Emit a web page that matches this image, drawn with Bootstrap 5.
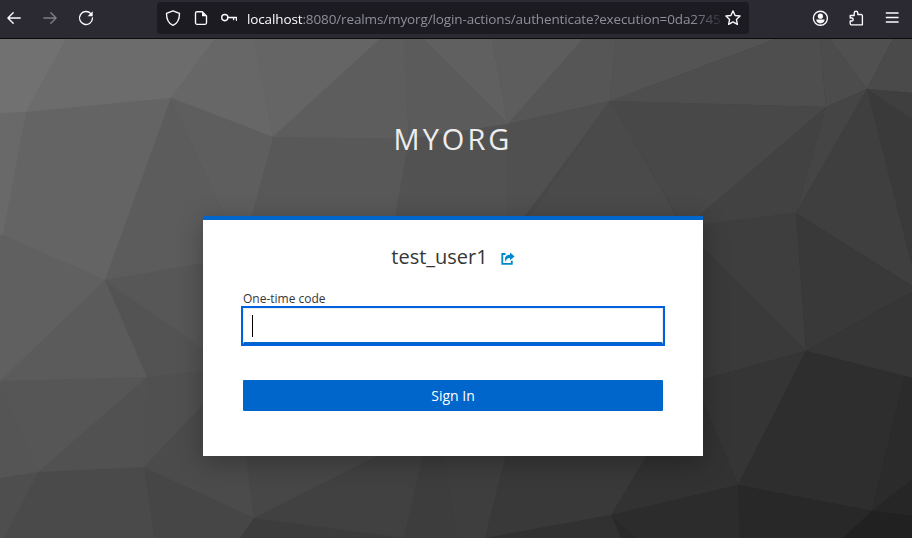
<!DOCTYPE html>
<html lang="en">
<head>
<meta charset="utf-8">
<meta name="viewport" content="width=device-width, initial-scale=1">
<title>Sign in to myorg</title>
<link href="https://cdn.jsdelivr.net/npm/bootstrap@5.3.0/dist/css/bootstrap.min.css" rel="stylesheet">
<style>
body{font-family:"Open Sans","Noto Sans",sans-serif;background:#444;color:#363636}
.window{width:912px;height:538px}
.toolbar{height:39px;background:#2b2a33;border-bottom:1px solid #0c0c0d;color:#fbfbfe;padding-bottom:2px}
.toolbar svg{display:block;flex:none;fill:none;stroke:currentColor;stroke-width:1.35;stroke-linecap:round;stroke-linejoin:round}
.nav-icons{width:157px;padding-left:6px;gap:20px}
.nav-icons .disabled-icon{opacity:.4}
.address{width:592px;height:32px;background:#1c1b22;border-radius:4px;padding:0 8px 0 8px}
.address .site-icons{gap:12px}
.url{width:474px;margin-left:10px;margin-right:4px;padding-top:2px;font-size:13.5px;letter-spacing:-.125px;line-height:20px;color:#8f8f98;-webkit-mask-image:linear-gradient(90deg,#000 94%,transparent 101%);mask-image:linear-gradient(90deg,#000 94%,transparent 101%)}
.url b{font-weight:400;color:#fbfbfe}
.tool-icons{gap:20px;padding-right:12px}
.stage{height:499px;padding-right:6px;padding-top:76px}
.backdrop{inset:0;z-index:0}
.realm{font-size:29px;line-height:48px;letter-spacing:3px;color:#ededed;font-weight:400;z-index:1}
.login{width:500px;height:240px;margin-top:53px;background:#fff;border-top:4px solid #06c;padding:24px 40px 0;z-index:1;box-shadow:0 6px 24px rgba(3,3,3,.28)}
.user{font-size:20px;line-height:26px;gap:13px}
.code-label{font-size:12px;line-height:18px;margin-top:20px}
.code-input{height:36px;border:1px solid #ededed;border-bottom:2px solid #06c;border-radius:0;padding:0 8px;outline:2px solid #0060df;color:#151515;box-shadow:none!important;outline-offset:0}
.caret{width:1px;height:22px;background:#000}
.signin{height:31px;margin-top:36px;background:#06c;color:#fff;font-size:14px;line-height:31px;border-radius:1px;padding:0;border:0}
</style>
</head>
<body>
<div class="window overflow-hidden d-flex flex-column">
<header class="toolbar d-flex align-items-center flex-shrink-0">
  <div class="nav-icons d-flex">
    <svg width="16" height="16" viewBox="0 0 16 16"><path d="M14.2 8H2M7.2 2.7 1.9 8l5.3 5.3"/></svg>
    <svg class="disabled-icon" width="16" height="16" viewBox="0 0 16 16"><path d="M1.8 8H14M8.8 2.7 14.1 8l-5.3 5.3"/></svg>
    <svg width="16" height="16" viewBox="0 0 16 16"><path d="M12.8 3.6A6.5 6.5 0 1 0 14.5 8"/><path d="M14.7 1.3V6.2H9.6z" fill="currentColor" stroke="none"/></svg>
  </div>
  <div class="address d-flex align-items-center">
    <div class="site-icons d-flex">
      <svg width="16" height="16" viewBox="0 0 16 16"><path d="M8 .8 14.5 3.4C14.5 8.8 12.8 13.3 8 15.3 3.2 13.3 1.5 8.8 1.5 3.4z"/></svg>
      <svg width="16" height="16" viewBox="0 0 16 16"><path d="M9.3 1.7H4A1.5 1.5 0 0 0 2.5 3.2v9.6A1.5 1.5 0 0 0 4 14.3h8a1.5 1.5 0 0 0 1.5-1.5V5.9z"/><path d="M9 1.7v4.5h4.5z" fill="currentColor" stroke="none"/></svg>
      <svg width="16" height="16" viewBox="0 0 16 16"><circle cx="3.8" cy="7.6" r="3.1"/><path d="M7 7.5h8.5v2.8M12.6 7.5v2"/></svg>
    </div>
    <div class="url text-nowrap overflow-hidden"><b>localhost</b>:8080/realms/myorg/login-actions/authenticate?execution=0da2745</div>
    <svg width="16" height="16" viewBox="0 0 16 16"><path d="m8 .9 2.1 4.6 5 .5-3.7 3.4 1 5L8 11.9l-4.4 2.5 1-5L.9 6l5-.5z"/></svg>
  </div>
  <div class="tool-icons d-flex ms-auto">
    <svg width="16" height="16" viewBox="0 0 16 16"><circle cx="8.4" cy="8.2" r="7"/><circle cx="8.4" cy="6.2" r="2.6" fill="currentColor" stroke="none"/><path d="M4.2 9.6h8.4c0 2.2-1.7 3.8-4.2 3.8s-4.2-1.6-4.2-3.8z" fill="currentColor" stroke="none"/></svg>
    <svg width="16" height="16" viewBox="0 0 16 16"><path d="M2.2 5.5h4V3a1.8 1.8 0 0 1 3.6 0v1.5h3.3a1.3 1.3 0 0 1 1.3 1.3V14.8H3.4a1.2 1.2 0 0 1-1.2-1.2V11h1.5a1.4 1.4 0 0 0 0-3H2.2z"/></svg>
    <svg width="16" height="16" viewBox="0 0 16 16"><path d="M2.5 3h11.4M2.5 7.5h11.4M2.5 12h11.4" stroke-linecap="square"/></svg>
  </div>
</header>
<main class="stage position-relative d-flex flex-column align-items-center">
  <!-- low-poly wallpaper -->
  <svg class="backdrop position-absolute" width="912" height="499" viewBox="0 39 912 499" aria-hidden="true">
    <defs><linearGradient id="tone" gradientUnits="userSpaceOnUse" x1="80" y1="0" x2="760" y2="600"><stop offset="0" stop-color="#707070"/><stop offset=".5" stop-color="#4a4a4a"/><stop offset="1" stop-color="#232323"/></linearGradient></defs>
    <rect y="39" width="912" height="499" fill="url(#tone)"/>
    <path fill="#717171" d="M0 39H66L26 112 0 113z"/>
    <path fill="#6c6c6c" d="M66 39H215L171 98 26 112z"/>
    <path fill="#696969" d="M0 113 26 112 3 235H0z"/>
    <path fill="#646464" d="M26 112 171 98 105 280 3 235z"/>
    <path fill="#676767" d="M215 39H254L273 137 171 98z"/>
    <path fill="#656565" d="M254 39H380L273 137z"/>
    <path fill="#5c5c5c" d="M171 98 228 216 270 300 105 280z"/>
    <path fill="#5e5e5e" d="M171 98 273 137 256 216 245 260z"/>
    <path fill="#5d5d5d" d="M380 39H404L409 139 273 137z"/>
    <path fill="#585858" d="M273 137 409 139 398 216 380 300 240 260z"/>
    <path fill="#5b5b5b" d="M404 39H424L508 124 409 139z"/>
    <path fill="#606060" d="M424 39H492L508 124z"/>
    <path fill="#5d5d5d" d="M492 39H583L508 124z"/>
    <path fill="#565656" d="M583 39H616L610 101 508 124z"/>
    <path fill="#525252" d="M409 139 508 124 506 300H380z"/>
    <path fill="#505050" d="M508 124 610 101 525 216 506 260z"/>
    <path fill="#4a4a4a" d="M610 101 677 216 703 260H500z"/>
    <path fill="#545454" d="M616 39H775L610 101z"/>
    <path fill="#4e4e4e" d="M775 39H820L826 107 610 101z"/>
    <path fill="#484848" d="M610 101 826 107 695 220H680z"/>
    <path fill="#4c4c4c" d="M820 39H830L867 89 826 107z"/>
    <path fill="#505050" d="M830 39H893L867 89z"/>
    <path fill="#4a4a4a" d="M893 39H912V93L867 89z"/>
    <path fill="#3f3f3f" d="M867 89 912 93V119z"/>
    <path fill="#3a3a3a" d="M867 89 912 119V265z"/>
    <path fill="#424242" d="M826 107 796 213 690 226V223z"/>
    <path fill="#454545" d="M826 107 867 89 796 213z"/>
    <path fill="#3f3f3f" d="M867 89 912 265V286L796 213z"/>
    <path fill="#3e3e3e" d="M690 226 796 213 806 351 690 234z"/>
    <path fill="#393939" d="M796 213 912 286V292L806 351z"/>
    <path fill="#3a3a3a" d="M690 234 806 351 690 383z"/>
    <path fill="#363636" d="M806 351 912 292V378z"/>
    <path fill="#353535" d="M690 383 806 351 738 485 690 370z"/>
    <path fill="#2e2e2e" d="M806 351 905 376 872 511 738 485z"/>
    <path fill="#2b2b2b" d="M905 376 912 378V480L872 511z"/>
    <path fill="#323232" d="M738 485 611 515 647 456 690 370z"/>
    <path fill="#2c2c2c" d="M738 485 740 538H636L611 515z"/>
    <path fill="#282828" d="M738 485 872 511 843 538H740z"/>
    <path fill="#262626" d="M872 511 912 480V516z"/>
    <path fill="#212121" d="M872 511 912 516V538H843z"/>
    <path fill="#292929" d="M611 515 636 538H621z"/>
    <path fill="#606060" d="M0 235H3L105 280 0 381z"/>
    <path fill="#5b5b5b" d="M105 280 147 377 0 381z"/>
    <path fill="#575757" d="M105 280 240 257V375z"/>
    <path fill="#535353" d="M105 280 240 375 147 377z"/>
    <path fill="#565656" d="M0 381 147 377 38 472z"/>
    <path fill="#555" d="M0 381 38 472 0 478z"/>
    <path fill="#515151" d="M147 377 144 467 38 472z"/>
    <path fill="#505050" d="M147 377 240 367 144 467z"/>
    <path fill="#4e4e4e" d="M0 478 38 472 4 538H0z"/>
    <path fill="#4a4a4a" d="M38 472 144 467 154 538H4z"/>
    <path fill="#464646" d="M144 467 254 518 240 538H154z"/>
    <path fill="#4b4b4b" d="M144 467 230 376 245 456 254 518z"/>
    <path fill="#474747" d="M244 440H400L377 456 254 518z"/>
    <path fill="#414141" d="M254 518 377 456 424 456 404 538z"/>
    <path fill="#3c3c3c" d="M254 518 404 538H240z"/>
    <path fill="#3d3d3d" d="M424 450H443L457 538H404z"/>
    <path fill="#3e3e3e" d="M443 450H507L485 538H457z"/>
    <path fill="#393939" d="M507 450H650L611 515 485 538z"/>
    <path fill="#313131" d="M485 538 611 515 621 538z"/>
  </svg>
  <h1 class="realm position-relative mb-0">MYORG</h1>
  <section class="login position-relative d-flex flex-column">
    <div class="user d-flex align-items-center justify-content-center">
      <span>test_user1</span>
      <svg width="14" height="14" viewBox="0 0 14 14" class="mt-1"><path d="M4.5 2H1.3v9.8h9.5V8.7" fill="none" stroke="#0088ce" stroke-width="1.8"/><path d="M9 .5 13.6 4.4 9 8.2V6C6.5 6 5.3 6.8 4.8 9.8 2.5 5.5 5.2 2.8 9 2.8z" fill="#0088ce"/></svg>
    </div>
    <label class="code-label">One-time code</label>
    <div class="code-input form-control d-flex align-items-center"><span class="caret"></span></div>
    <button class="signin btn w-100">Sign In</button>
  </section>
</main>
</div>
<script src="https://cdn.jsdelivr.net/npm/bootstrap@5.3.0/dist/js/bootstrap.bundle.min.js"></script>
</body>
</html>
